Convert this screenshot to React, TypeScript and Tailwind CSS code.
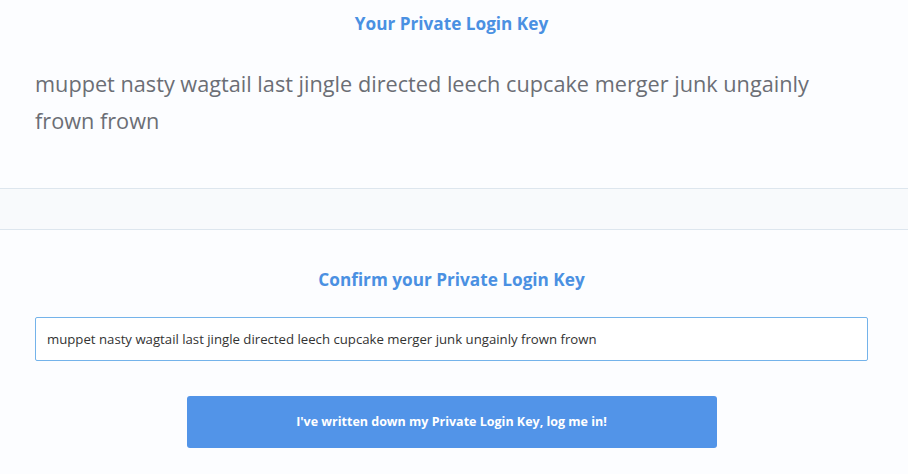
import { useState } from "react";

const phrase =
  "muppet nasty wagtail last jingle directed leech cupcake merger junk ungainly frown frown";

export default function App() {
  const [value, setValue] = useState(phrase);

  return (
    <div
      className="min-h-screen bg-[#fcfdff] text-[#6b6e75]"
      style={{ fontFamily: '"Open Sans", "Liberation Sans", sans-serif' }}
    >
      <div className="h-[188px] pl-[35px] pr-[40px] pt-[13px]">
        <h2 className="text-center text-[17.2px] font-bold leading-[22px] text-[#4a90e2]">
          Your Private Login Key
        </h2>
        <p className="mt-[30px] text-[21.7px] leading-[37px] text-[#6b6e75]">{phrase}</p>
      </div>

      <div className="h-[42px] border-y border-[#dde6ee] bg-[#f8fafc]" />

      <div className="pl-[35px] pr-[40px] pt-[39px] pb-[26px]">
        <h2 className="text-center text-[17.2px] font-bold leading-[22px] text-[#4a90e2]">
          Confirm your Private Login Key
        </h2>
        <input
          value={value}
          onChange={(e) => setValue(e.target.value)}
          className="mt-[26px] block h-[44px] w-full rounded-[2px] border border-[#74b3ea] bg-white px-[11px] text-[13.2px] text-[#333] outline-none"
        />
        <div className="mt-[35px] flex justify-center">
          <button className="h-[52px] w-[530px] rounded-[3px] bg-[#5294e8] text-[12.5px] font-bold text-white">
            I've written down my Private Login Key, log me in!
          </button>
        </div>
      </div>
    </div>
  );
}
